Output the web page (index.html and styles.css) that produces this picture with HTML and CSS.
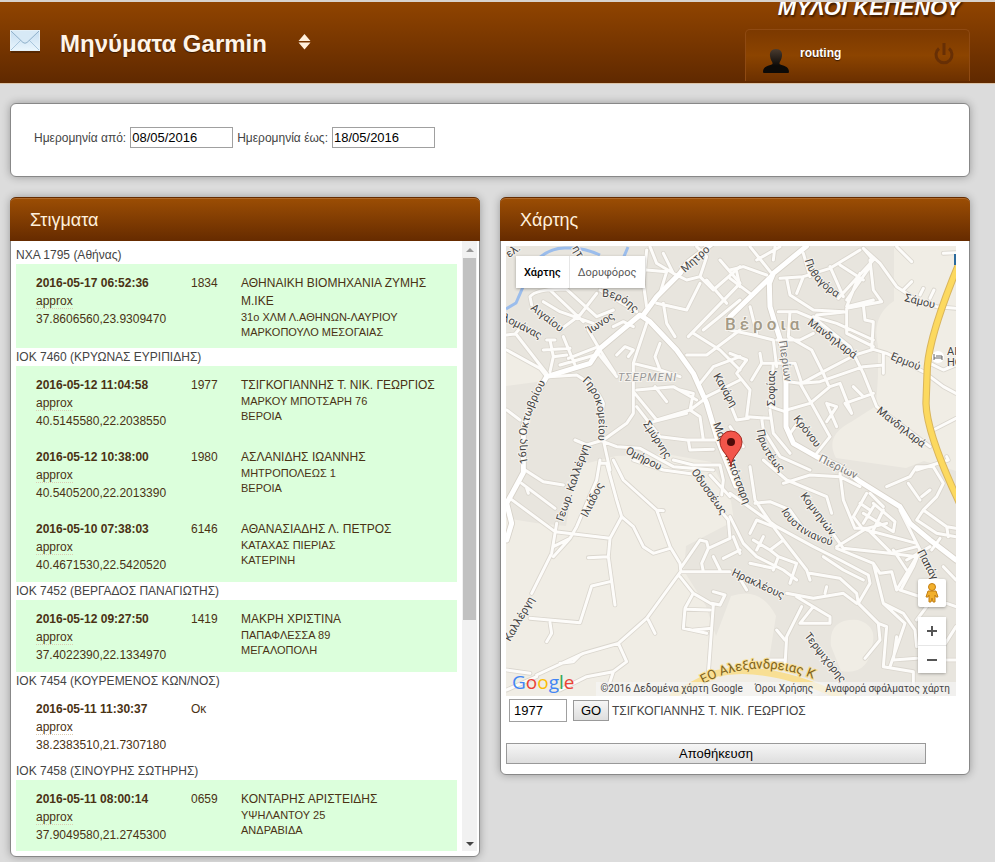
FILE: index.html
```html
<!DOCTYPE html>
<html lang="el">
<head>
  <meta charset="UTF-8">
  <title>Μηνύματα Garmin</title>
  <link rel="stylesheet" href="styles.css">
</head>
<body>
  <header class="top-bar">
    <svg class="mail-icon" width="30" height="23" viewBox="0 0 30 23">
      <defs>
        <linearGradient id="mailFill" x1="0" y1="0" x2="0" y2="1">
          <stop offset="0" stop-color="#c4dcf0"/>
          <stop offset="1" stop-color="#eaf6fd"/>
        </linearGradient>
      </defs>
      <rect x="1" y="1" width="29" height="22" fill="#3a1c04" opacity=".5"/>
      <rect x="0.5" y="0.5" width="29" height="20" fill="url(#mailFill)" stroke="#e4f0f8"/>
      <path d="M1 20L11 10M29 20L19 10" stroke="#a9c6dc" fill="none"/>
      <path d="M1 1L13 12.500Q15 14 17 12.500L29 1" stroke="#8fb0ca" fill="#d7e9f6"/>
    </svg>
    <h1>Μηνύματα Garmin</h1>
    <svg class="sort-icon" width="13" height="16" viewBox="0 0 13 16">
      <path d="M6.500 0L12.500 7H0.500ZM0.500 8.500H12.500L6.500 15.500Z" fill="#fff0dc"/>
    </svg>
    <div class="account">
      <div class="brand">ΜΥΛΟΙ ΚΕΠΕΝΟΥ</div>
      <div class="user-box">
        <svg class="avatar" width="28" height="26" viewBox="0 0 28 26">
          <defs>
            <linearGradient id="avatarFill" x1="0" y1="0" x2="0" y2="1">
              <stop offset="0" stop-color="#4a3c30"/>
              <stop offset=".7" stop-color="#0c0a08"/>
            </linearGradient>
          </defs>
          <path d="M14 1C18.500 1 20.500 4 20 8C19.500 12 17.500 14 17.500 15V16C21 18 27 18 27 24Q27 25 26 25H2Q1 25 1 24C1 18 7 18 10.500 16V15C10.500 14 8.500 12 8 8C7.500 4 9.500 1 14 1Z" fill="url(#avatarFill)"/>
        </svg>
        <span class="user-name">routing</span>
        <button type="button" class="power-btn" aria-label="Αποσύνδεση">
          <svg width="22" height="24" viewBox="0 0 22 24">
            <path d="M6 6.500A8 8 0 1 0 16 6.500" fill="none" stroke="#672f05" stroke-width="3"/>
            <path d="M11 1V13" stroke="#672f05" stroke-width="3"/>
          </svg>
        </button>
      </div>
    </div>
  </header>

  <main>
    <form class="box filters">
      <label for="dateFrom">Ημερομηνία από:</label>
      <input type="text" id="dateFrom" value="08/05/2016">
      <label for="dateTo">Ημερομηνία έως:</label>
      <input type="text" id="dateTo" value="18/05/2016">
    </form>

    <div class="columns">
      <section class="box">
        <h2>Στιγματα</h2>
        <div class="list-wrap">
          <div class="list">
            <div class="vehicle">NXA 1795 (Αθήνας)</div>
            <div class="stop matched">
              <div class="when"><b>2016-05-17 06:52:36</b><br><abbr>approx</abbr><br>37.8606560,23.9309470</div>
              <div>1834</div>
              <div>ΑΘΗΝΑΙΚΗ ΒΙΟΜΗΧΑΝΙΑ ΖΥΜΗΣ Μ.ΙΚΕ<div class="address">31ο ΧΛΜ Λ.ΑΘΗΝΩΝ-ΛΑΥΡΙΟΥ<br>ΜΑΡΚΟΠΟΥΛΟ ΜΕΣΟΓΑΙΑΣ</div></div>
            </div>

            <div class="vehicle">ΙΟΚ 7460 (ΚΡΥΩΝΑΣ ΕΥΡΙΠΙΔΗΣ)</div>
            <div class="stop matched">
              <div class="when"><b>2016-05-12 11:04:58</b><br><abbr>approx</abbr><br>40.5145580,22.2038550</div>
              <div>1977</div>
              <div>ΤΣΙΓΚΟΓΙΑΝΝΗΣ Τ. ΝΙΚ. ΓΕΩΡΓΙΟΣ<div class="address">ΜΑΡΚΟΥ ΜΠΟΤΣΑΡΗ 76<br>ΒΕΡΟΙΑ</div></div>
            </div>
            <div class="stop matched">
              <div class="when"><b>2016-05-12 10:38:00</b><br><abbr>approx</abbr><br>40.5405200,22.2013390</div>
              <div>1980</div>
              <div>ΑΣΛΑΝΙΔΗΣ ΙΩΑΝΝΗΣ<div class="address">ΜΗΤΡΟΠΟΛΕΩΣ 1<br>ΒΕΡΟΙΑ</div></div>
            </div>
            <div class="stop matched">
              <div class="when"><b>2016-05-10 07:38:03</b><br><abbr>approx</abbr><br>40.4671530,22.5420520</div>
              <div>6146</div>
              <div>ΑΘΑΝΑΣΙΑΔΗΣ Λ. ΠΕΤΡΟΣ<div class="address">ΚΑΤΑΧΑΣ ΠΙΕΡΙΑΣ<br>ΚΑΤΕΡΙΝΗ</div></div>
            </div>

            <div class="vehicle">ΙΟΚ 7452 (ΒΕΡΓΑΔΟΣ ΠΑΝΑΓΙΩΤΗΣ)</div>
            <div class="stop matched">
              <div class="when"><b>2016-05-12 09:27:50</b><br><abbr>approx</abbr><br>37.4022390,22.1334970</div>
              <div>1419</div>
              <div>ΜΑΚΡΗ ΧΡΙΣΤΙΝΑ<div class="address">ΠΑΠΑΦΛΕΣΣΑ 89<br>ΜΕΓΑΛΟΠΟΛΗ</div></div>
            </div>

            <div class="vehicle">ΙΟΚ 7454 (ΚΟΥΡΕΜΕΝΟΣ ΚΩΝ/ΝΟΣ)</div>
            <div class="stop">
              <div class="when"><b>2016-05-11 11:30:37</b><br><abbr>approx</abbr><br>38.2383510,21.7307180</div>
              <div>Οκ</div>
              <div></div>
            </div>

            <div class="vehicle">ΙΟΚ 7458 (ΣΙΝΟΥΡΗΣ ΣΩΤΗΡΗΣ)</div>
            <div class="stop matched">
              <div class="when"><b>2016-05-11 08:00:14</b><br><abbr>approx</abbr><br>37.9049580,21.2745300</div>
              <div>0659</div>
              <div>ΚΟΝΤΑΡΗΣ ΑΡΙΣΤΕΙΔΗΣ<div class="address">ΥΨΗΛΑΝΤΟΥ 25<br>ΑΝΔΡΑΒΙΔΑ</div></div>
            </div>
          </div>
          <div class="scrollbar" aria-hidden="true">
            <span class="arrow arrow-up"></span>
            <span class="thumb"></span>
            <span class="arrow arrow-down"></span>
          </div>
        </div>
      </section>

      <section class="box">
        <h2>Χάρτης</h2>
        <div class="map-body">
          <div class="map">
            <svg class="map-canvas" viewBox="0 0 450 450" preserveAspectRatio="xMidYMid slice">
              <defs>
                <!-- streets are drawn at three times the map scale, one group per quarter -->
                <g id="streets">
                  <path transform="translate(-18 -18)" d="M95 195L90 170Q110 145 200 148M130 185L180 215L280 250M150 150L250 245M200 148L290 230L340 210M180 270L240 225L290 160M150 300L160 350L150 395M20 285L45 282L60 265M50 285L120 375L140 400M20 330L120 385L140 410M140 300L165 300M130 330L210 325M190 290L225 375M160 350L200 345M205 355L295 320M180 375L285 345M265 270L300 330L345 400M300 150L410 215M350 345L375 320L400 330L385 350M290 335L350 410M440 250L400 370L400 440L400 520L380 550L310 600M400 370L480 390M480 310L465 350L480 390L540 410M410 450L520 440L590 480M400 455L470 540L570 510L610 480M440 550L560 520M465 440L500 485M410 500L480 590L560 600L650 600M540 450L580 460L570 510L600 530L610 600M565 600L570 630L640 628M225 600L260 615L310 600L330 690M310 605L350 620L420 625L520 680L640 690M150 410L230 405Q290 440 310 490L300 590M440 200L430 130L440 30M440 90L500 95L480 160M490 40L520 100L560 120L600 110L640 150L720 80M520 100L470 70L450 20M600 110L620 50L590 20M490 190L500 250L525 290M565 290L720 130M470 190L560 210L600 130M610 270L720 180M580 280L660 330L720 390M560 345L620 345L720 270M600 430L640 380L720 350M620 470L720 420M340 260L370 245L400 260M20 510L60 540M620 120L680 190M660 60L720 130"/>
                  <path transform="translate(672 -18)" d="M60 20L125 100M130 60L135 20M80 60L150 20M0 90L40 80L110 105M0 115L60 160M20 95L30 140M150 115L220 110L300 85L390 30M170 115L180 165L250 210L340 215M220 110L200 160M240 110L220 40M300 80L340 170M330 75L400 120M390 100L350 200L430 180M350 180L420 80M325 175L430 60L400 25M420 60L430 150L455 185L350 205L350 280L430 320M400 195L405 240L430 245L425 330M400 25L450 70L500 140L560 180L620 200L678 205M500 20L545 65M520 150L545 125M570 165L580 145M600 175L612 150M640 40L678 38M145 215L200 215L260 240L360 320L375 350M180 215L175 290L245 330L280 400L295 435M260 225L350 215M250 230L320 250L430 300M140 300L210 300L250 280M215 430L280 395L375 345L430 328L470 340L580 395M175 425L210 430L250 500L300 590M215 430L270 425L400 380L460 375M460 340L460 400M375 350L400 400L440 500L600 620M170 510L240 490L300 440L330 430L365 520M365 520L345 490L430 460M290 490L320 500L290 545M290 490L320 560M370 440L400 470M130 370L195 370L215 430M90 340L95 370L130 370L120 500L165 515M0 340L50 360L20 400L60 450L50 530L120 535M95 370L65 420M0 270L70 285L130 300L140 380M60 200L80 280M0 490L20 540L55 535M0 560L40 620M95 535L100 570L150 650L240 690M120 510L130 580L180 640M210 540L180 580M300 590L260 640M600 370L640 390L678 375M600 410L640 440L678 460M610 570L678 535M560 690L655 660L650 650"/>
                  <path transform="translate(-18 642)" d="M75 30L130 65L190 75M65 70L165 145M85 100L80 85M30 115L165 215L330 235M300 0L290 60L230 200L210 235L160 260M170 190L155 280L95 400M210 235L160 290M300 10L320 10L350 120L365 170L330 235L325 290L345 435M365 170L400 200L430 260L460 280L510 265M340 0L370 60L470 150L510 260L540 310L542 330M470 150L490 152M265 293L325 290M330 365L275 378L240 488L90 475M150 488L155 520L140 545M542 335L440 475L355 550L250 580L110 645M445 480L465 520M355 550L380 605L340 635L260 650L180 690M340 635L325 680M180 610L220 605L240 585M545 335L690 335M545 320L600 240L620 245L625 265L605 310L610 335M625 265L690 235L685 180L660 150M640 290L660 330M670 295L720 270M540 350L580 400L640 435L625 640L590 690M640 395L675 405L660 435L635 430M580 400L555 445L550 505L620 520M580 510L635 505M560 448L630 450M400 0L490 30L600 45M520 0L580 15L660 15L670 60L665 105M630 45L690 110M680 0L720 60M20 630L90 640M20 690L110 650M700 230L720 280"/>
                  <path transform="translate(672 642)" d="M100 0L170 60L290 110L305 160M160 70L240 45L330 50L390 80M60 20L75 120L130 200M75 130L120 125L180 150L230 220M0 100L140 200L250 260L330 300L415 345L420 370L385 430M330 40L340 120L375 205L410 205L480 275M410 100L370 170L400 210M390 130L420 150M420 100L460 140M430 130L495 185L490 215L400 160M460 150L430 210M430 140L400 190M280 180L340 265L480 280L560 260M320 260L410 205L470 190M320 265L430 310L460 430L520 460L555 510L560 560M430 310L450 340L485 335L500 390L560 290L480 280M490 270L530 330M510 390L600 420M510 150L570 270L550 320L515 385M410 210L560 250M470 80L540 50L560 20L610 20L640 70L620 110L580 150L560 180M535 70L570 120M575 110L600 90M580 150L650 200L678 205M650 200L655 230M630 235L605 270M560 180L620 220L678 230M0 170L40 250L80 290L160 330L200 360M60 220L80 180L130 200L160 240L120 270L70 240M120 270L145 290L130 330M100 230L80 270M160 240L230 330L240 360M145 290L200 310L180 370M130 325L60 310M240 340L330 355L380 400L385 430M280 290L340 330L400 360M170 400L250 415L340 400L380 430M200 410L250 440L210 490L300 490L300 470L250 440M215 440L170 530L165 620M140 510L165 540M165 600L110 600M385 430L445 490L450 540L405 595M445 490L470 500L460 620L550 635L550 690M460 430L525 490L480 620M500 530L490 600L560 595M20 340L50 390M560 480L590 440M600 600L678 600M640 560L678 500M640 320L678 360M650 430L678 440M530 300L600 260M290 380L285 400"/>
                </g>
                <g id="avenues">
                  <path d="M122 392L252 352L282 307L402 207L432 227L512 312L562 382L602 472L632 572L690 720M412 207L452 152L522 82L542 52L622 -10M122 392L82 462L52 542L52 680L2 772L17 832L2 882M902 0L802 82L790 112L792 182L832 312L840 412L840 542L862 592L932 632L1002 662L1062 707L1182 782L1212 832L1272 882L1350 942M800 87L672 212"/>
                </g>
                <path id="l1" d="M96 51Q116 50 132 72"/>
                <path id="l2" d="M76 135Q98 154 91 200"/>
                <path id="l3" d="M22 217Q12 180 46 126"/>
                <path id="l4" d="M299 14Q303 36 336 55"/>
                <path id="l5" d="M251 184Q254 210 282 234"/>
                <path id="l6" d="M275 265Q290 292 334 302"/>
                <path id="l7" d="M197 438Q245 412 300 430L350 450"/>
              </defs>
              <rect width="450" height="450" fill="#e8e5de"/>
              <path class="rural" d="M0 272Q30 278 60 280L70 220L110 210L160 208L205 216L225 255L228 275L180 300L178 325L200 360L210 390L225 350Q255 340 270 370L262 420L325 440L310 450H0ZM388 0H450V225L418 215L400 222L330 212Q318 190 345 176L370 160L372 130L372 100Q365 70 388 55ZM0 105L35 125L38 135L0 140ZM325 400Q322 372 352 374Q372 380 366 400Q362 430 335 425Z"/>
              <path d="M0 63L10 57L17 41L31 14Q44 1 61 2Q77 1 94 9M111 27L122 1" fill="none" stroke="#9bbdec" stroke-width="3"/>
              <g transform="scale(.33333)" fill="none" stroke-linejoin="round" stroke-linecap="round">
                <use href="#streets" stroke="#dad6ce" stroke-width="14"/>
                <use href="#avenues" stroke="#d6d1c8" stroke-width="20"/>
                <use href="#streets" stroke="#fdfcfa" stroke-width="9"/>
                <use href="#avenues" stroke="#fff" stroke-width="15"/>
                <path d="M500 1350Q580 1302 632 1282Q780 1250 1000 1350" stroke="#f8df94" stroke-width="20"/>
                <path d="M1360 50Q1272 262 1264 362L1260 472Q1262 562 1360 770" stroke="#d9b55c" stroke-width="22"/>
                <path d="M1360 50Q1272 262 1264 362L1260 472Q1262 562 1360 770" stroke="#fcd95f" stroke-width="16"/>
              </g>
              <path d="M449 8V19" stroke="#2c6a9c" stroke-width="2"/>
              <g class="labels">
                <text><textPath href="#l1">Βερόης</textPath></text>
                <text><textPath href="#l2">Γηροκομείου</textPath></text>
                <text><textPath href="#l3">16ης Οκτωβρίου</textPath></text>
                <text><textPath href="#l4">Πυθαγόρα</textPath></text>
                <text><textPath href="#l5">Πρωτέως</textPath></text>
                <text><textPath href="#l6">Ιουστινιανού</textPath></text>
                <text class="highway"><textPath href="#l7">ΕΟ Αλεξάνδρειας Κ</textPath></text>
                <text transform="translate(3 12) rotate(-35)">ελ.</text>
                <text transform="translate(66 2) rotate(60)">ητ</text>
                <text transform="translate(179 27) rotate(-42)">Μητρο</text>
                <text transform="translate(24 63) rotate(38)">Αιγαίου</text>
                <text transform="translate(84 88) rotate(-33)">Ίωνος</text>
                <text transform="translate(-4 74) rotate(27)">λομάνας</text>
                <text transform="translate(207 130) rotate(60)">Κανάρη</text>
                <text transform="translate(137 178) rotate(57)">Σμύρνης</text>
                <text transform="translate(119 207) rotate(27)">Ομήρου</text>
                <text transform="translate(207 178) rotate(69)">Μάρκ. Μπότσαρη</text>
                <text transform="translate(57 276) rotate(-71)">Γεωρ. Καλλέργη</text>
                <text transform="translate(81 272) rotate(-63)">Ιλιάδος</text>
                <text transform="translate(185 226) rotate(55)">Οδυσσέως</text>
                <text transform="translate(4 396) rotate(-60)">Καλλέργη</text>
                <text transform="translate(225 329) rotate(25)">Ηρακλέους</text>
                <text transform="translate(298 390) rotate(52)">Τερψιχόρης</text>
                <text transform="translate(398 55) rotate(14)">Σάμου</text>
                <text transform="translate(301 78) rotate(37)">Μανδηλαρά</text>
                <text transform="translate(384 113) rotate(22)">Ερμού</text>
                <text class="soft" transform="translate(273 95) rotate(82)">Πιερίων</text>
                <text transform="translate(269 160) rotate(-90)">Σοφίας</text>
                <text transform="translate(370 166) rotate(38)">Μανδηλαρά</text>
                <text transform="translate(287 173) rotate(52)">Κρόνου</text>
                <text class="soft" transform="translate(312 215) rotate(26)">Πιερίων</text>
                <text transform="translate(294 250) rotate(53)">Κομνηνών</text>
                <text transform="translate(411 306) rotate(62)">Παπάγου</text>
                <text x="441" y="109">ΑΙ</text>
                <text x="441" y="120">ΗΟ</text>
                <text class="district" x="112" y="135">ΤΣΕΡΜΕΝΙ</text>
                <text class="city" x="219" y="84">Βέροια</text>
              </g>
              <circle cx="432" cy="111" r="6" fill="#fff"/>
              <path d="M428 108V114M428 112H436V114M430 110H436V112" stroke="#666" fill="none"/>
              <path d="M225 221C225 210 214 206 214 196A11 11 0 0 1 236 196C236 206 225 210 225 221Z" fill="#f2554a" stroke="#a3281f"/>
              <circle cx="225" cy="196" r="4" fill="#4d0b09"/>
            </svg>
            <div class="map-types">
              <button type="button" class="active">Χάρτης</button>
              <button type="button">Δορυφόρος</button>
            </div>
            <div class="map-controls">
              <button type="button" class="pegman" aria-label="Street View">
                <svg width="14" height="20" viewBox="0 0 14 20">
                  <circle cx="7" cy="4" r="3.500" fill="#f2b02c" stroke="#c27e12"/>
                  <path d="M3 8H11L13 14H11L10 12V19H8L7 15L6 19H4V12L3 14H1Z" fill="#f2b02c" stroke="#c27e12"/>
                </svg>
              </button>
              <div class="zoom">
                <button type="button" aria-label="Μεγέθυνση"><svg width="10" height="10"><path d="M0 5H10M5 0V10" stroke="#555" stroke-width="2"/></svg></button>
                <button type="button" aria-label="Σμίκρυνση"><svg width="10" height="10"><path d="M0 5H10" stroke="#555" stroke-width="2"/></svg></button>
              </div>
            </div>
            <div class="google"><span class="g-blue">G</span><span class="g-red">o</span><span class="g-yellow">o</span><span class="g-blue">g</span><span class="g-green">l</span><span class="g-red">e</span></div>
            <div class="credits">
              <span>©2016 Δεδομένα χάρτη Google</span>
              <a href="#">Όροι Χρήσης</a>
              <a href="#">Αναφορά σφάλματος χάρτη</a>
            </div>
          </div>
          <form class="assign">
            <input type="text" id="code" value="1977" aria-label="Κωδικός">
            <button type="button">GO</button>
            <label for="code">ΤΣΙΓΚΟΓΙΑΝΝΗΣ Τ. ΝΙΚ. ΓΕΩΡΓΙΟΣ</label>
          </form>
          <button type="button" class="save">Αποθήκευση</button>
        </div>
      </section>
    </div>
  </main>
</body>
</html>
```
FILE: styles.css
```css
* {
  box-sizing: border-box;
}
body {
  margin: 0;
  background: #dcdcdc;
  font-family: "Liberation Sans", Arial, sans-serif;
  font-size: 12px;
  line-height: 18px;
  color: #444;
}
input, button {
  font-family: inherit;
}

/* top bar */
.top-bar {
  display: flex;
  height: 84px;
  padding: 0 25px 0 10px;
  overflow: hidden;
  background: linear-gradient(#904400, #602900);
  border-top: 2px solid #d8d2cc;
  border-bottom: 1px solid #dcc4a8;
  color: #fff;
}
.mail-icon {
  margin-top: 28px;
}
.top-bar h1 {
  margin: 27px 0 0 20px;
  font-size: 24px;
  line-height: 30px;
  color: #fff4e8;
  text-shadow: 0 1px 1px #3a1a00;
}
.sort-icon {
  margin: 32px 0 0 31px;
}
.account {
  width: 225px;
  margin-left: auto;
}
.brand {
  height: 27px;
  padding-right: 9px;
  font-size: 22px;
  font-weight: bold;
  font-style: italic;
  line-height: 12px;
  text-align: right;
  text-shadow: 1px 2px 2px #3a1a00;
}
.user-box {
  display: flex;
  align-items: flex-start;
  height: 52px;
  padding: 0 14px 0 16px;
  background: linear-gradient(#7c3900, #8c4400 50%, #6c3000);
  border: 1px solid #8f4a12;
  border-bottom: none;
  border-radius: 5px 5px 0 0;
}
.avatar {
  margin-top: 18px;
}
.user-name {
  margin: 14px 0 0 10px;
  font-weight: bold;
  text-shadow: 0 1px 1px #3a1a00;
}
.power-btn {
  margin: 12px 0 0 auto;
  padding: 0;
  border: none;
  background: none;
}

/* boxes */
main {
  padding: 19px 25px 6px 10px;
}
.box {
  background: #fff;
  border: 1px solid #888;
  border-radius: 6px;
  box-shadow: 0 0 8px rgba(0, 0, 0, 0.3);
}
.filters {
  display: flex;
  align-items: flex-start;
  gap: 4px;
  height: 74px;
  padding: 23px;
}
.filters label {
  line-height: 22px;
}
.filters input {
  width: 103px;
  height: 21px;
  padding: 0 1px;
  border: 1px solid #a0a0a0;
  font-size: 13px;
}
.columns {
  display: grid;
  grid-template-columns: 1fr 1fr;
  align-items: start;
  gap: 20px;
  margin-top: 20px;
}
.box h2 {
  margin: -1px -1px 0;
  padding: 2px 20px 0;
  border-top: 1px solid #662c00;
  border-radius: 6px 6px 0 0;
  background: linear-gradient(#9c4e04, #662b00);
  box-shadow: inset 0 1px 0 #b06a2c;
  font-size: 18px;
  font-weight: normal;
  line-height: 41px;
  color: #fff0dc;
}

/* stops list */
.list-wrap {
  display: flex;
  height: 610px;
  margin: 0 2px 5px 0;
}
.list {
  flex: 1;
  padding: 5px 5px 0;
  overflow: hidden;
}
.stop {
  display: grid;
  grid-template-columns: 155px 50px 200px;
  padding: 10px 0 8px 20px;
  color: #4a3214;
}
.matched {
  background: #dcffdc;
}
.address {
  font-size: 11px;
  line-height: 15px;
}
.when abbr {
  border-bottom: 1px dotted #dccdb4;
}
.scrollbar {
  display: flex;
  flex-direction: column;
  align-items: center;
  width: 15px;
  background: #f1f1f1;
}
.arrow {
  border: 4px solid transparent;
}
.arrow-up {
  margin: 3px 0 6px;
  border-bottom-color: #999;
}
.thumb {
  width: 13px;
  height: 362px;
  background: #c1c1c1;
}
.arrow-down {
  margin: auto 0 1px;
  border-top-color: #444;
}

/* map */
.map-body {
  padding: 5px 5px 10px;
}
.map {
  position: relative;
  height: 450px;
  margin-right: 8px;
  overflow: hidden;
  font-family: Roboto, "Noto Sans", sans-serif;
}
.map-canvas {
  display: block;
  width: 100%;
  height: 100%;
}
.rural {
  fill: #f0ede5;
}
.labels text {
  font-size: 11px;
  fill: #444;
  stroke: #f6f3ee;
  stroke-width: 2px;
  paint-order: stroke;
}
.labels .soft {
  fill: #777;
}
.labels .highway {
  font-size: 13px;
  fill: #7d6220;
  stroke: #f8df94;
}
.labels .district {
  font-style: italic;
  letter-spacing: 1px;
  fill: #999;
}
.labels .city {
  font-size: 17px;
  font-weight: 500;
  letter-spacing: 4px;
  fill: #a39a86;
}
.map-types {
  position: absolute;
  top: 10px;
  left: 10px;
  display: flex;
  box-shadow: 0 1px 3px rgba(0, 0, 0, 0.3);
}
.map-types button {
  height: 32px;
  padding: 0 8px;
  border: none;
  background: #fff;
  font-size: 11px;
  color: #565656;
}
.map-types .active {
  border-right: 1px solid #e6e6e6;
  font-weight: 500;
  color: #000;
}
.map-controls {
  position: absolute;
  right: 10px;
  bottom: 23px;
  display: flex;
  flex-direction: column;
  gap: 10px;
}
.map-controls button {
  display: flex;
  align-items: center;
  justify-content: center;
  width: 28px;
  height: 28px;
  padding: 0;
  border: none;
  background: #fff;
}
.pegman, .zoom {
  border-radius: 2px;
  box-shadow: 0 1px 3px rgba(0, 0, 0, 0.3);
}
.zoom button + button {
  border-top: 1px solid #e6e6e6;
}
.google {
  position: absolute;
  left: 6px;
  bottom: 2px;
  font-family: "Open Sans", sans-serif;
  font-size: 19px;
  font-weight: 500;
  line-height: 24px;
}
.g-blue {
  color: #4285f4;
}
.g-red {
  color: #ea4335;
}
.g-yellow {
  color: #fbbc05;
}
.g-green {
  color: #34a853;
}
.credits {
  position: absolute;
  right: 0;
  bottom: 0;
  display: flex;
  gap: 12px;
  padding: 0 6px 0 4px;
  background: rgba(245, 245, 245, 0.7);
  font-size: 10px;
  line-height: 14px;
}
.credits a {
  color: #444;
  text-decoration: none;
}
.assign {
  display: flex;
  align-items: center;
  margin: 3px 0 0 3px;
}
.assign input {
  width: 58px;
  height: 23px;
  margin-right: 6px;
  padding: 0 4px;
  border: 1px solid #a0a0a0;
  font-size: 13px;
}
.assign button, .save {
  height: 21px;
  padding: 0;
  border: 1px solid #999;
  background: linear-gradient(#f6f6f6, #dedede);
  font-size: 13px;
}
.assign button {
  width: 36px;
  margin-right: 3px;
}
.save {
  display: block;
  width: calc(100% - 38px);
  margin-top: 21px;
}
```
